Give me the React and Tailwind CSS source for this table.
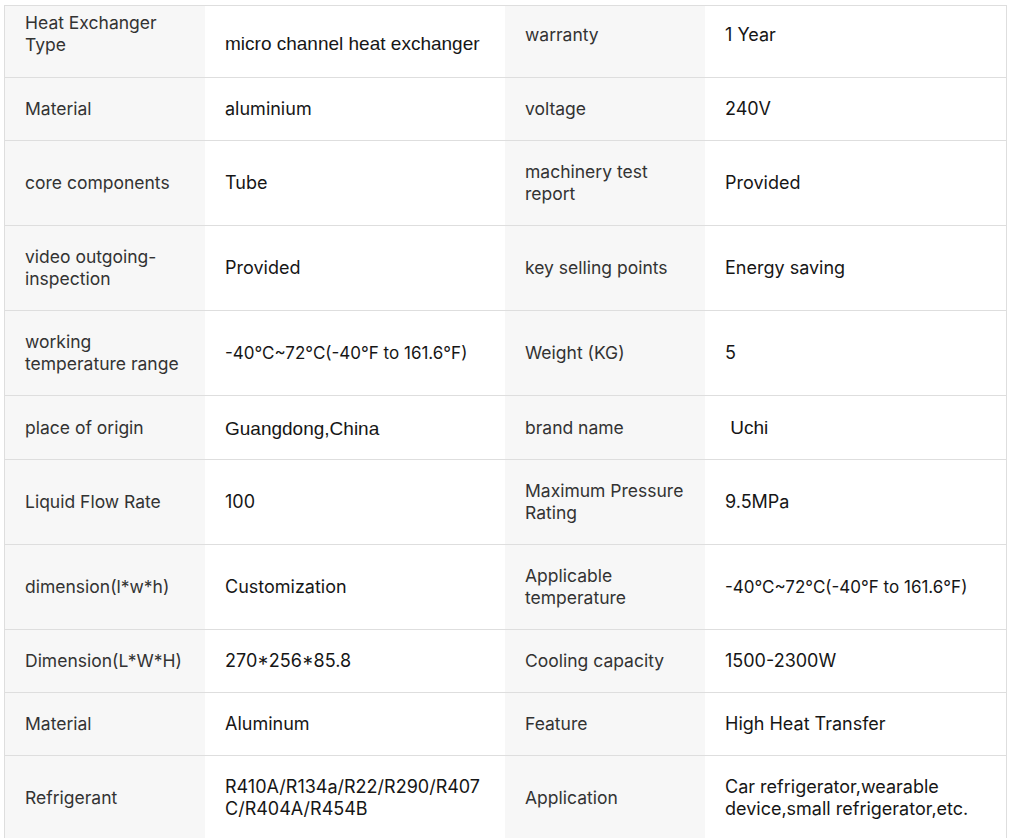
const inter = "font-['Inter','Noto_Sans',sans-serif]";
const arial = "font-['Liberation_Sans',Arial,sans-serif] text-[19px]";
const temp = inter + " text-[17px]";

const rows = [
  {
    h: "h-[72px] items-start",
    a: ["Heat Exchanger", "Type"],
    aPad: "pt-[6px] pb-0",
    b: ["micro channel heat exchanger"],
    bFont: arial,
    bPad: "pt-[27px] pb-0",
    c: ["warranty"],
    cPad: "pt-[18px] pb-0",
    d: ["1 Year"],
    dPad: "pt-[18px] pb-0",
  },
  { a: ["Material"], b: ["aluminium"], c: ["voltage"], d: ["240V"] },
  { a: ["core components"], b: ["Tube"], c: ["machinery test", "report"], d: ["Provided"] },
  { a: ["video outgoing-", "inspection"], b: ["Provided"], c: ["key selling points"], d: ["Energy saving"] },
  {
    a: ["working", "temperature range"],
    b: ["-40°C~72°C(-40°F to 161.6°F)"],
    bFont: temp,
    c: ["Weight (KG)"],
    d: ["5"],
  },
  {
    h: "h-[64px]",
    a: ["place of origin"],
    b: ["Guangdong,China"],
    bFont: arial,
    bPad: "pt-[22px] pb-[20px]",
    c: ["brand name"],
    d: ["\u00a0Uchi"],
    dFont: arial,
    dPad: "pt-[21px] pb-[21px]",
  },
  { a: ["Liquid Flow Rate"], b: ["100"], c: ["Maximum Pressure", "Rating"], d: ["9.5MPa"] },
  {
    a: ["dimension(l*w*h)"],
    b: ["Customization"],
    c: ["Applicable", "temperature"],
    d: ["-40°C~72°C(-40°F to 161.6°F)"],
    dFont: temp,
  },
  { a: ["Dimension(L*W*H)"], b: ["270*256*85.8"], c: ["Cooling capacity"], d: ["1500-2300W"] },
  { a: ["Material"], b: ["Aluminum"], c: ["Feature"], d: ["High Heat Transfer"] },
  {
    a: ["Refrigerant"],
    b: ["R410A/R134a/R22/R290/R407", "C/R404A/R454B"],
    c: ["Application"],
    d: ["Car refrigerator,wearable", "device,small refrigerator,etc."],
  },
];

function Lines({ lines }) {
  return lines.map((l, i) => (
    <span key={i}>
      {l}
      {i < lines.length - 1 && <br />}
    </span>
  ));
}

function Cell({ lines, label, wide, last, font, pad }) {
  const size = label ? "text-[17.5px]" : "text-[18px]";
  return (
    <div
      className={`flex items-center self-stretch px-5 ${pad || "py-5"} ${
        wide ? (last ? "w-[301px]" : "w-[300px]") : "w-[200px]"
      } ${label ? "bg-[#f7f7f7] text-[#333]" : "bg-white text-[#161616]"} ${
        font || inter + " " + size
      } leading-[22px]`}
    >
      <div className={pad ? "self-start" : ""}>
        <Lines lines={lines} />
      </div>
    </div>
  );
}

export default function App() {
  return (
    <div className="min-h-screen bg-white pt-[5px] pl-[4px]">
      <div className="w-[1003px] border-t border-l border-r border-[#dedede]">
        {rows.map((r, i) => (
          <div key={i} className={`flex border-b border-[#dedede] ${r.h || ""}`}>
            <Cell lines={r.a} label pad={r.aPad} />
            <Cell lines={r.b} wide font={r.bFont} pad={r.bPad} />
            <Cell lines={r.c} label pad={r.cPad} />
            <Cell lines={r.d} wide last font={r.dFont} pad={r.dPad} />
          </div>
        ))}
      </div>
    </div>
  );
}
